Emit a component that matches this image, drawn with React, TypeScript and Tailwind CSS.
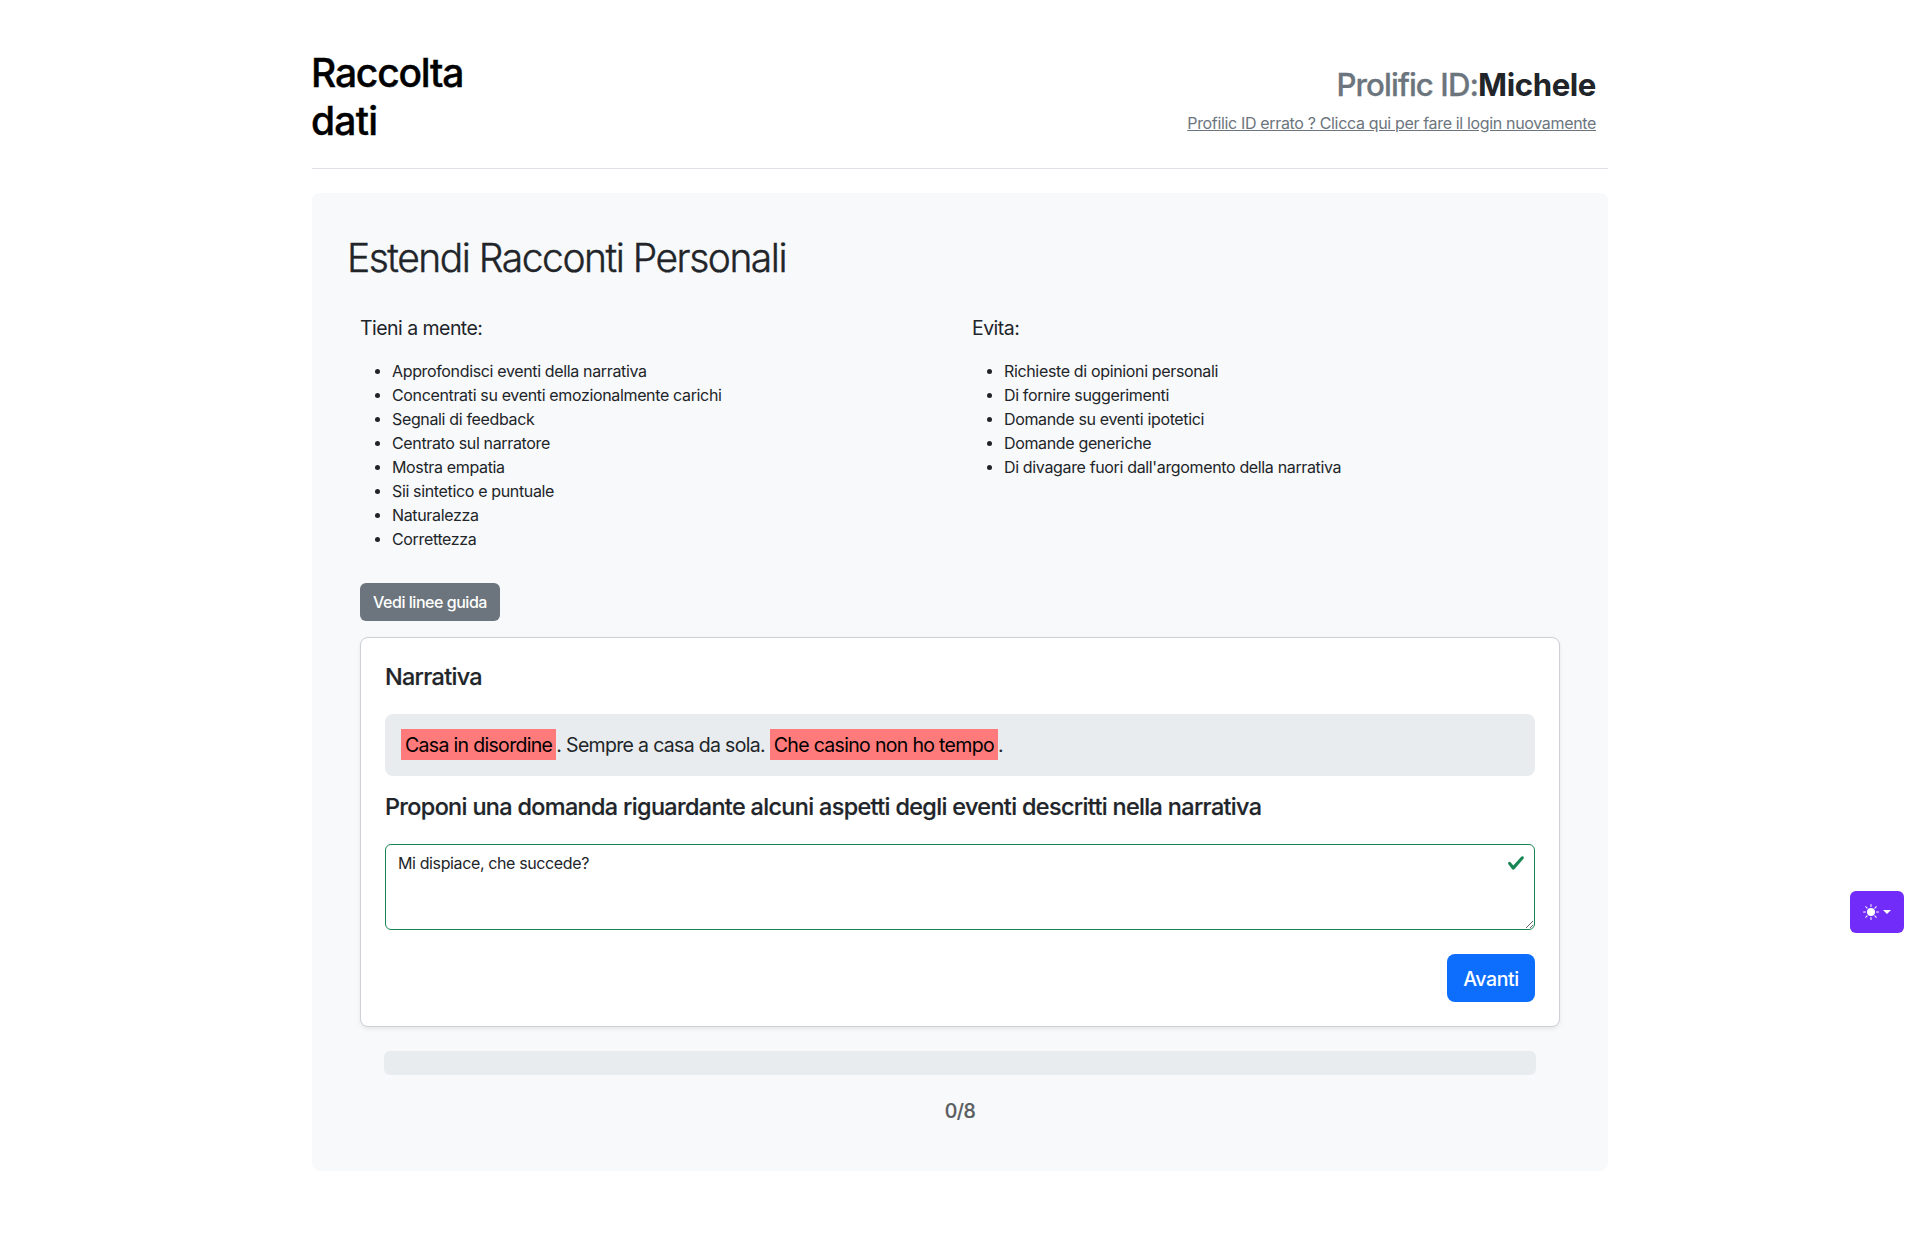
import { BsSunFill } from "react-icons/bs";

const tips = [
  "Approfondisci eventi della narrativa",
  "Concentrati su eventi emozionalmente carichi",
  "Segnali di feedback",
  "Centrato sul narratore",
  "Mostra empatia",
  "Sii sintetico e puntuale",
  "Naturalezza",
  "Correttezza",
];

const avoid = [
  "Richieste di opinioni personali",
  "Di fornire suggerimenti",
  "Domande su eventi ipotetici",
  "Domande generiche",
  "Di divagare fuori dall'argomento della narrativa",
];

function Column({ title, items }: { title: string; items: string[] }) {
  return (
    <div className="w-[612px] shrink-0">
      <h2 className="text-[19.5px] leading-[30px] tracking-[-0.54px]">{title}</h2>
      <ul className="mt-4 text-[16px] leading-6 tracking-[-0.35px]">
        {items.map((item) => (
          <li key={item} className="flex items-center">
            <span className="ml-[15px] mr-[12px] size-[5px] rounded-full bg-[#212529]" />
            <span>{item}</span>
          </li>
        ))}
      </ul>
    </div>
  );
}

export default function App() {
  return (
    <div className="relative min-h-[1243px] bg-white font-['Inter',sans-serif] text-[#212529]">
      <div className="mx-auto w-[1296px] pt-12">
        <header className="flex h-[121px] justify-between border-b border-[#dee2e6]">
          <h1 className="-ml-px mt-px text-[39px] font-medium leading-[48px] tracking-[-1.2px] text-black [-webkit-text-stroke:0.4px]">
            Raccolta
            <br />
            <span className="tracking-[-0.8px]">dati</span>
          </h1>
          <div className="mr-3 mt-[18px] flex flex-col items-end">
            <div className="text-[31.2px] leading-[38px]">
              <span className="font-medium tracking-[-0.92px] text-[#6c757d] [-webkit-text-stroke:0.3px]">Prolific ID:</span>
              <span className="font-bold tracking-[-0.42px]">Michele</span>
            </div>
            <a className="mt-[7px] text-[16px] leading-6 tracking-[-0.34px] text-[#6c757d] underline">
              Profilic ID errato ? Clicca qui per fare il login nuovamente
            </a>
          </div>
        </header>
        <main className="mt-6 h-[978px] rounded-lg bg-[#f8f9fb] px-12 pt-[41px]">
          <h2 className="-ml-[13px] text-[39px] font-light leading-[48px] tracking-[-1.49px] [-webkit-text-stroke:0.4px]">Estendi Racconti Personali</h2>
          <div className="mt-[31px] flex h-[238px]">
            <Column title="Tieni a mente:" items={tips} />
            <Column title="Evita:" items={avoid} />
          </div>
          <button className="mt-8 block h-[38px] w-[140px] rounded-md bg-[#6c757d] text-[16px] font-medium tracking-[-0.46px] text-white">
            Vedi linee guida
          </button>
          <section className="mt-4 h-[390px] rounded-lg border border-[#cdd0d4] bg-white p-6 shadow-[0_2px_4px_rgba(0,0,0,0.075)]">
            <h3 className="text-[23.4px] font-medium leading-[29px] tracking-[-0.68px] [-webkit-text-stroke:0.2px]">Narrativa</h3>
            <p className="mt-[23px] flex h-[62px] items-center whitespace-pre rounded-lg bg-[#e8ecee] px-4 text-[19.5px] tracking-[-0.68px]">
              <mark className="-mt-px bg-[#ff7a7a] px-1 pb-px pt-[3px] leading-[27px] text-black">Casa in disordine</mark>
              <span className="pt-px">{". Sempre a casa da sola. "}</span>
              <mark className="-mt-px bg-[#ff7a7a] px-1 pb-px pt-[3px] leading-[27px] text-black">Che casino non ho tempo</mark>
              <span className="pt-px">.</span>
            </p>
            <h3 className="mt-4 text-[23.4px] font-medium leading-[29px] tracking-[-0.64px] [-webkit-text-stroke:0.2px]">
              Proponi una domanda riguardante alcuni aspetti degli eventi descritti nella narrativa
            </h3>
            <div className="relative mt-[23px] h-[86px]">
              <textarea
                className="block h-full w-full rounded-md border border-[#198754] bg-white px-3 py-1.5 text-[16px] leading-6 tracking-[-0.38px] outline-none"
                defaultValue="Mi dispiace, che succede?"
              />
              <svg viewBox="0 0 8 8" className="pointer-events-none absolute right-[10px] top-[10px] size-[18px]" fill="#198754">
                <path d="M2.3 6.73.6 4.53c-.4-1.04.46-1.4 1.1-.8l1.1 1.4 3.4-3.8c.6-.63 1.6-.27 1.2.7l-4 4.6c-.43.5-.8.4-1.1.1z" />
              </svg>
            </div>
            <button className="ml-auto mt-6 block h-12 w-[88px] rounded-lg bg-[#0d6efd] pt-px text-[19.5px] font-medium leading-[30px] tracking-[-0.42px] text-white">
              Avanti
            </button>
          </section>
          <div className="mx-6 mt-6 h-6 rounded-md bg-[#e8ecee]" />
          <p className="mt-[21px] text-center text-[19.5px] font-medium leading-[30px] tracking-[-0.5px] text-[#595d60] [-webkit-text-stroke:0.2px]">0/8</p>
        </main>
      </div>
      <button className="absolute left-[1850px] top-[891px] flex h-[42px] w-[54px] items-center rounded-md bg-[#712cf9] pl-[13px] text-white">
        <BsSunFill className="size-4" />
        <span className="ml-1 border-x-4 border-t-4 border-x-transparent border-t-white" />
      </button>
    </div>
  );
}
